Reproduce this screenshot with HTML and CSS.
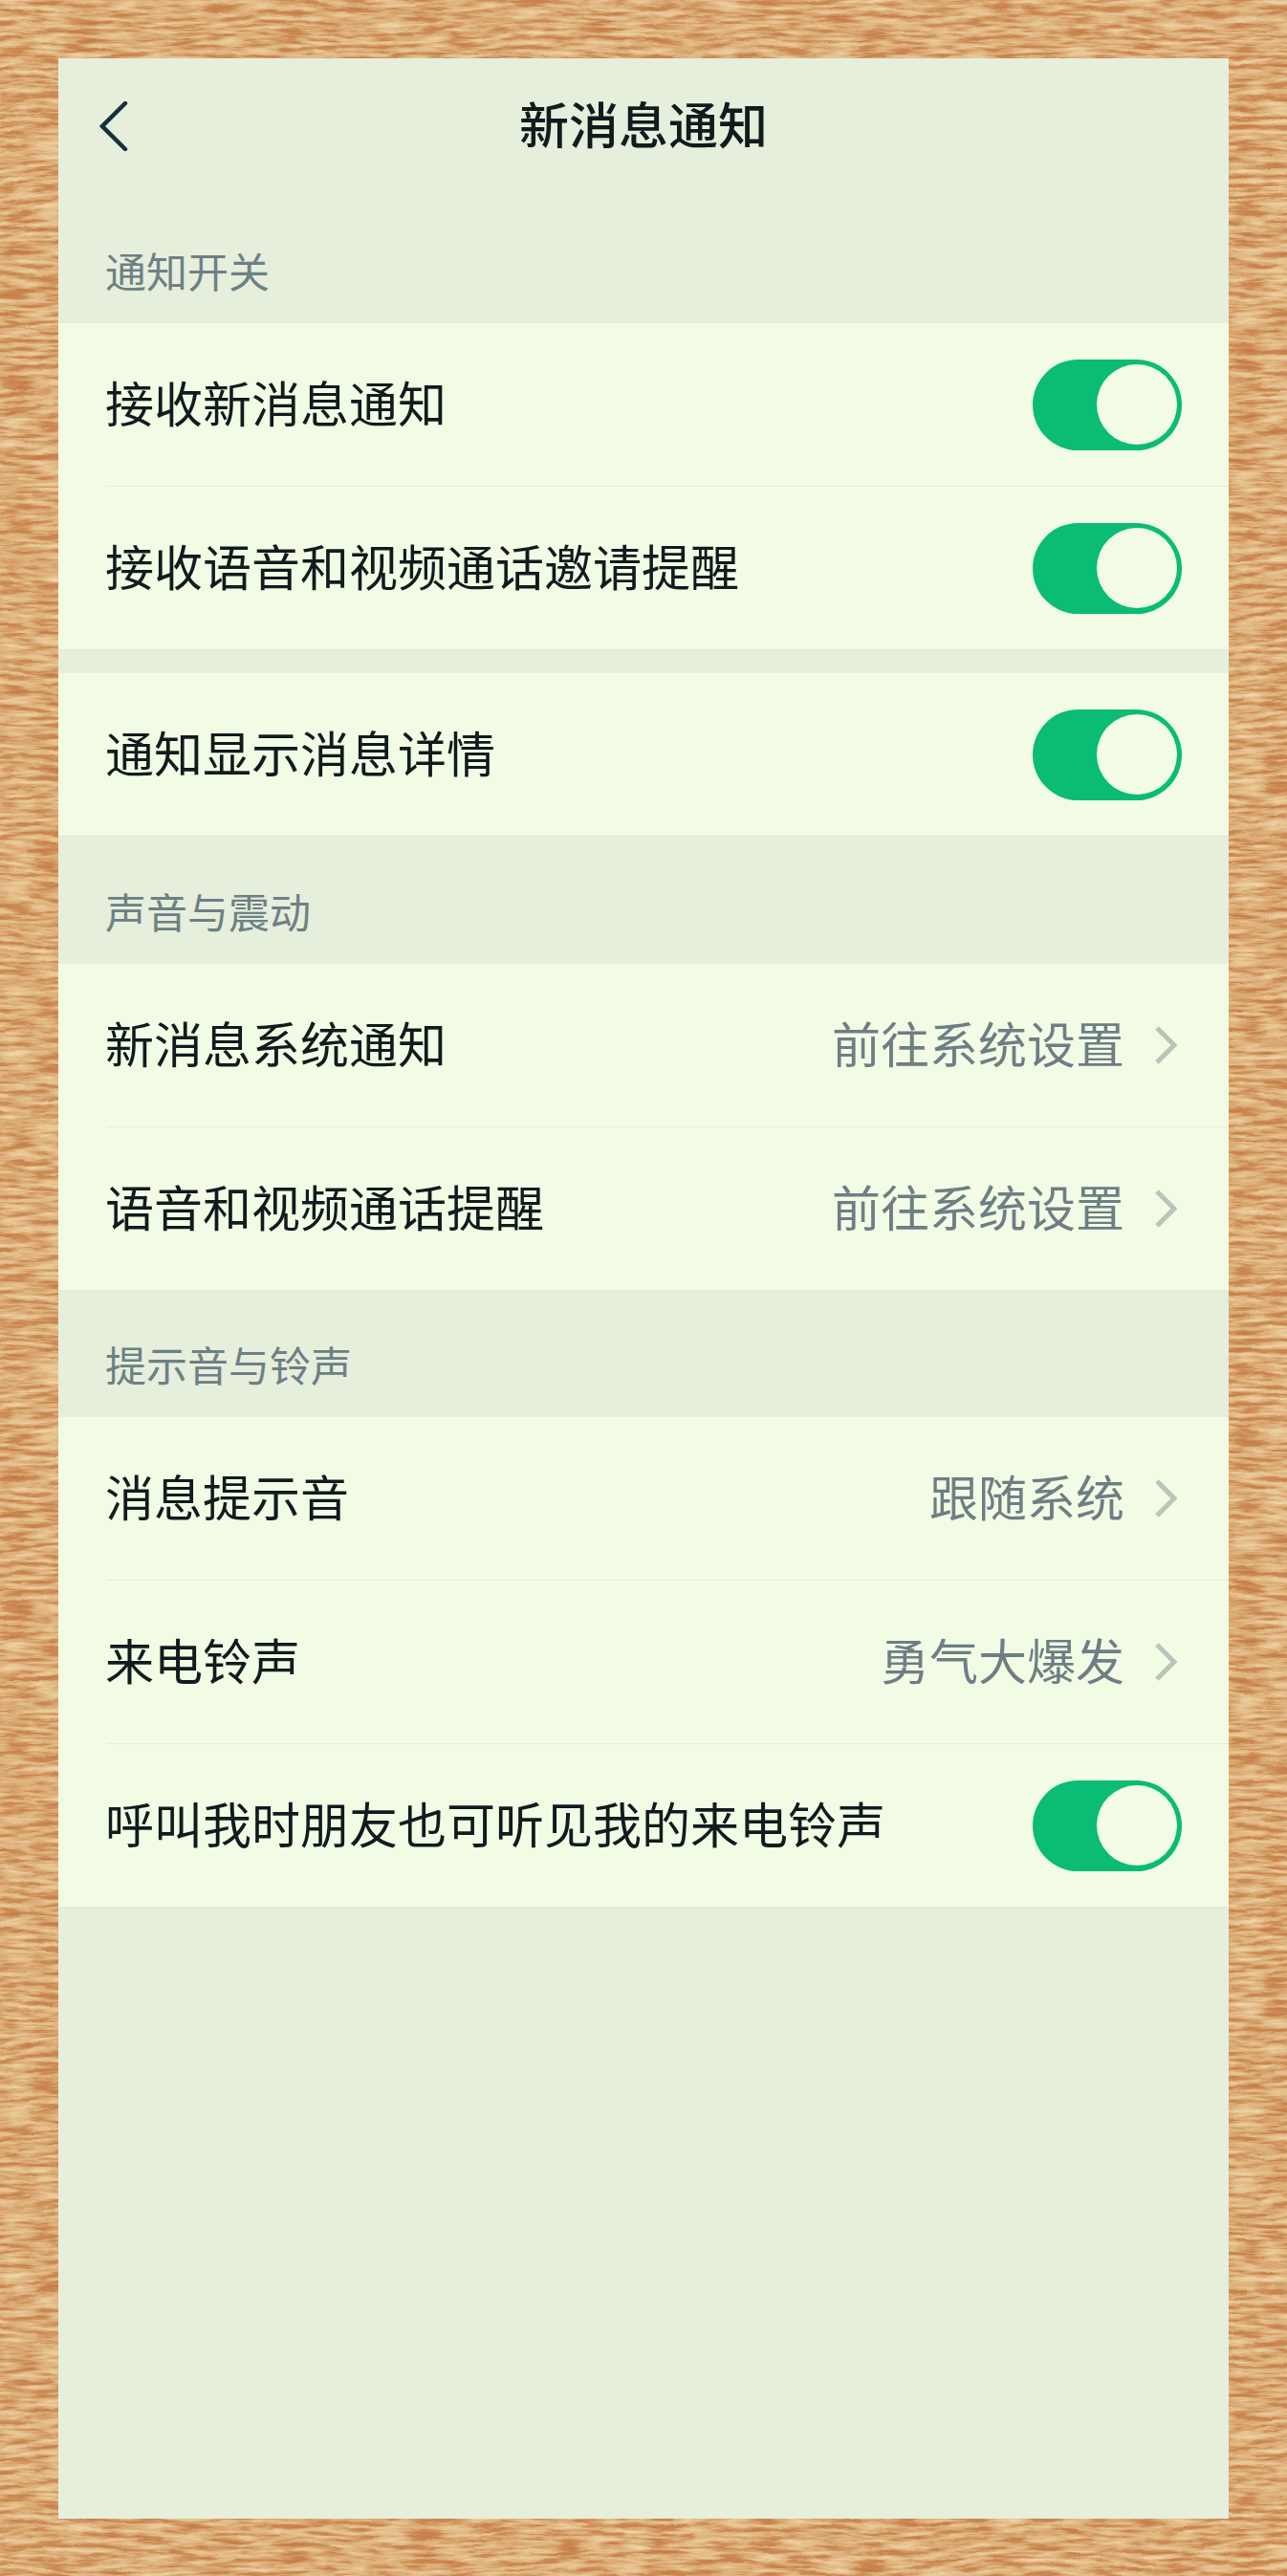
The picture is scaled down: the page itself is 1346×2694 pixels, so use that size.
FILE: index.html
```html
<!DOCTYPE html>
<html lang="zh-CN">
<head>
    <meta charset="UTF-8">
    <meta name="viewport" content="width=device-width, initial-scale=1.0">
    <title>新消息通知</title>
    <link rel="stylesheet" href="styles.css">
</head>
<body>
    <!-- Wood grain behind the panel -->
    <svg class="wood" width="1346" height="2694" aria-hidden="true">
        <filter id="grain" x="-5%" y="-5%" width="110%" height="110%" color-interpolation-filters="sRGB">
            <feTurbulence type="fractalNoise" baseFrequency="0.028 0.2" numOctaves="4" seed="11" result="noise"/>
            <feTurbulence type="fractalNoise" baseFrequency="0.006 0.02" numOctaves="2" seed="3" result="wave"/>
            <feDisplacementMap in="noise" in2="wave" scale="16" xChannelSelector="R" yChannelSelector="G"/>
            <feColorMatrix type="matrix" values="1 0 0 0 0  1 0 0 0 0  1 0 0 0 0  0 0 0 0 1"/>
            <feComponentTransfer>
                <feFuncR type="table" tableValues="0.76 0.78 0.80 0.86 0.90 0.93 0.94"/>
                <feFuncG type="table" tableValues="0.47 0.49 0.54 0.68 0.76 0.82 0.85"/>
                <feFuncB type="table" tableValues="0.28 0.29 0.33 0.47 0.56 0.64 0.67"/>
            </feComponentTransfer>
        </filter>
        <rect width="1346" height="2694" filter="url(#grain)"/>
    </svg>

    <div class="panel">
        <header class="nav">
            <svg class="nav-back" width="30" height="52" viewBox="0 0 30 52">
                <path d="M27 2 L3 26 L27 50"/>
            </svg>
            <h1 class="nav-title">新消息通知</h1>
        </header>

        <div class="section-label section-label-first">通知开关</div>
        <div class="group">
            <div class="row">
                <span class="row-name">接收新消息通知</span>
                <span class="toggle"><span class="toggle-knob"></span></span>
            </div>
            <div class="row">
                <span class="row-name">接收语音和视频通话邀请提醒</span>
                <span class="toggle"><span class="toggle-knob"></span></span>
            </div>
        </div>

        <div class="group-gap"></div>
        <div class="group">
            <div class="row">
                <span class="row-name">通知显示消息详情</span>
                <span class="toggle"><span class="toggle-knob"></span></span>
            </div>
        </div>

        <div class="section-label">声音与震动</div>
        <div class="group">
            <div class="row">
                <span class="row-name">新消息系统通知</span>
                <span class="row-value">前往系统设置</span>
                <svg class="row-arrow" width="23" height="40" viewBox="0 0 23 40"><path d="M2 2 L20 20 L2 38"/></svg>
            </div>
            <div class="row">
                <span class="row-name">语音和视频通话提醒</span>
                <span class="row-value">前往系统设置</span>
                <svg class="row-arrow" width="23" height="40" viewBox="0 0 23 40"><path d="M2 2 L20 20 L2 38"/></svg>
            </div>
        </div>

        <div class="section-label">提示音与铃声</div>
        <div class="group">
            <div class="row">
                <span class="row-name">消息提示音</span>
                <span class="row-value">跟随系统</span>
                <svg class="row-arrow" width="23" height="40" viewBox="0 0 23 40"><path d="M2 2 L20 20 L2 38"/></svg>
            </div>
            <div class="row">
                <span class="row-name">来电铃声</span>
                <span class="row-value">勇气大爆发</span>
                <svg class="row-arrow" width="23" height="40" viewBox="0 0 23 40"><path d="M2 2 L20 20 L2 38"/></svg>
            </div>
            <div class="row">
                <span class="row-name">呼叫我时朋友也可听见我的来电铃声</span>
                <span class="toggle"><span class="toggle-knob"></span></span>
            </div>
        </div>
    </div>
</body>
</html>
```

FILE: styles.css
```css
html, body {
    margin: 0;
    padding: 0;
}
body {
    position: relative;
    height: 2694px;
    overflow: hidden;
    box-sizing: border-box;
    padding: 61px;
    background-color: #dba86f;
    font-family: "Noto Sans CJK SC", "Noto Sans", sans-serif;
    color: #0f1c1d;
}
.wood {
    position: absolute;
    top: 0;
    left: 0;
}
.panel {
    position: relative;
    height: 2573px;
    background-color: #e6eedc;
}

/* Top bar */
.nav {
    position: relative;
    display: flex;
    align-items: center;
    justify-content: center;
    height: 142px;
}
.nav-back {
    position: absolute;
    left: 43px;
    top: 45px;
}
.nav-back path {
    fill: none;
    stroke: #17303a;
    stroke-width: 4.5;
    stroke-linecap: round;
}
.nav-title {
    margin: 0 0 6px;
    font-size: 52px;
    font-weight: 500;
    line-height: 60px;
}

/* Section captions */
.section-label {
    display: flex;
    align-items: flex-end;
    box-sizing: border-box;
    height: 132.5px; /* 875 to 1008, 1350 to 1482 */
    padding: 0 49px 35px;
    font-size: 43px;
    line-height: 42px;
    color: #6d8084;
}
.section-label-first {
    height: 135px;
}
.group-gap {
    height: 24px;
}

/* Rows */
.group {
    background-color: #f2fce5;
    padding-left: 51px;
    border-bottom: 1px solid #e1e9d7;
}
.row {
    display: flex;
    align-items: center;
    height: 170px;
    padding-right: 49px;
    font-size: 51px;
}
.row + .row {
    border-top: 1px solid #e4ecda;
}
.row-name {
    flex: 1;
    margin-left: -2px;
    padding-bottom: 6px;
    white-space: nowrap;
}
.row-value {
    padding-bottom: 6px;
    color: #6d7f84;
    white-space: nowrap;
}
.row-arrow {
    margin: 0 5px 0 32px;
}
.row-arrow path {
    fill: none;
    stroke: #b9c4bb;
    stroke-width: 5;
}

/* Switch, always on in this screen */
.toggle {
    display: flex;
    justify-content: flex-end;
    align-items: center;
    box-sizing: border-box;
    width: 156px;
    height: 95px;
    padding-right: 5px;
    border-radius: 48px;
    background-color: #0abc74;
}
.toggle-knob {
    width: 84px;
    height: 84px;
    border-radius: 50%;
    background-color: #f2fce5;
}
```
